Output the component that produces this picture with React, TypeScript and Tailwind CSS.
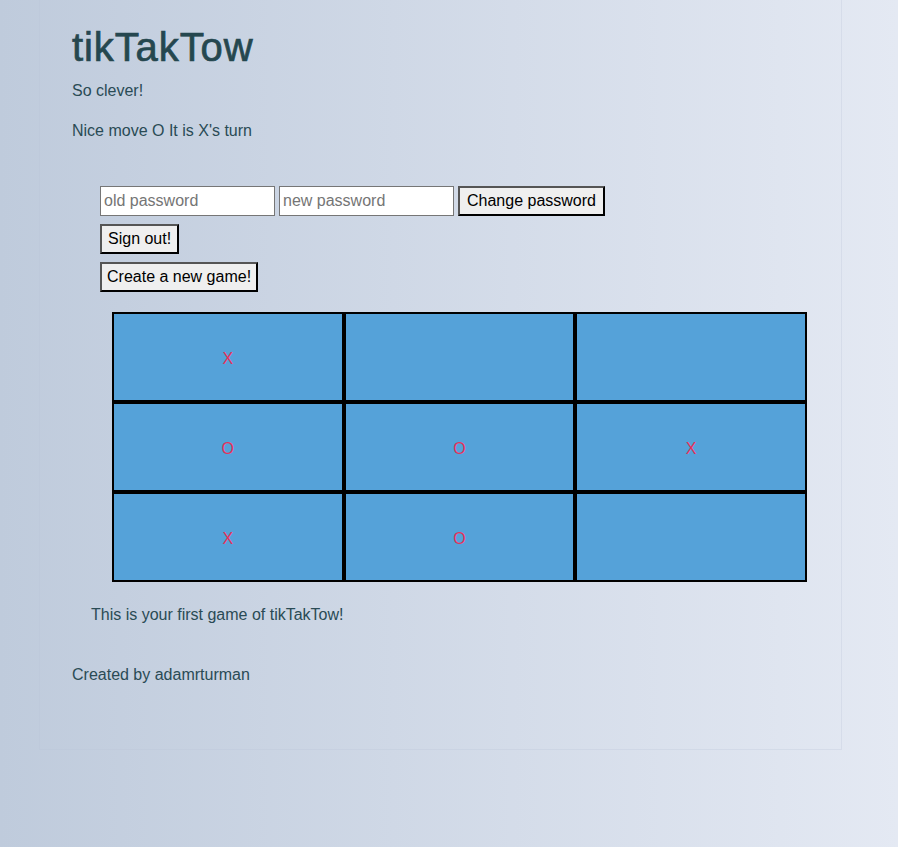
import React from 'react';

const board = ['X', '', '', 'O', 'O', 'X', 'X', 'O', ''];

const font = "font-['Liberation_Sans',Arial,sans-serif]";

const btn = 'h-[30px] bg-[#efefef] border-2 border-[#555] border-b-black border-r-black';

const App = () => {
  return (
    <div className={`min-h-[847px] w-full bg-linear-to-r from-[#bfcbdc] to-[#e4e9f3] ${font}`}>
      <div className="ml-[39px] w-[803px] h-[750px] border border-t-0 border-[#b9c5d6]/30 px-8 pt-[23px] text-[#2a4b55]">
        {/* header */}
        <h1 className="text-[40px] leading-[48px] font-normal tracking-[0.9px] text-[#25474f] [-webkit-text-stroke:0.7px_#25474f]">
          tikTakTow
        </h1>
        <p className="mt-2 text-base leading-6">So clever!</p>
        <p className="mt-4 text-base leading-6">Nice move O It is X's turn</p>

        {/* account forms */}
        <div className="mt-[43px] ml-7 flex flex-col gap-2 items-start text-base text-black">
          <form className="flex gap-1" onSubmit={e => e.preventDefault()}>
            <input
              type="password"
              placeholder="old password"
              className="w-[175px] h-[30px] bg-white border border-[#767676] px-[3px] placeholder:text-[#757575]"
            />
            <input
              type="password"
              placeholder="new password"
              className="w-[175px] h-[30px] bg-white border border-[#767676] px-[3px] placeholder:text-[#757575]"
            />
            <button className={`${btn} px-[7px]`}>Change password</button>
          </form>
          <button className={`${btn} px-[6px]`}>Sign out!</button>
          <button className={`${btn} px-[5px]`}>Create a new game!</button>
        </div>

        {/* game board */}
        <div className="mt-5 ml-10 w-[695px] grid grid-cols-3">
          {board.map((v, i) => (
            <div
              key={i}
              className="h-[90px] pt-[3px] border-2 border-black bg-[#55a2d9] flex items-center justify-center text-base text-[#e8315a]"
            >
              {v}
            </div>
          ))}
        </div>

        <p className="mt-[21px] ml-[19px] text-base leading-6">This is your first game of tikTakTow!</p>
        <p className="mt-9 text-base leading-6">Created by adamrturman</p>
      </div>
    </div>
  );
};

export default App;
